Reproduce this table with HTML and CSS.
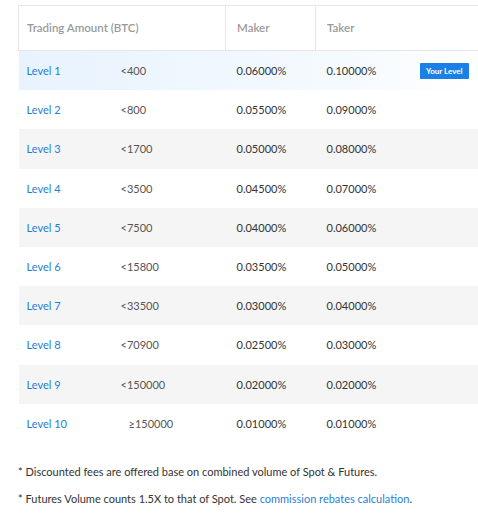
FILE: index.html
```html
<!DOCTYPE html>
<html lang="en">
  <head>
    <meta charset="UTF-8" />
    <meta name="viewport" content="width=device-width, initial-scale=1.0" />
    <title>Fee Levels</title>
    <link rel="stylesheet" href="styles.css">
  </head>
  <body>
    <div class="fees">
      <table class="fee-table">
        <colgroup>
          <col class="c-level" />
          <col class="c-amount" />
          <col class="c-maker" />
          <col class="c-taker" />
          <col class="c-badge" />
        </colgroup>
        <thead>
          <tr>
            <th colspan="2" class="col-amount">Trading Amount (BTC)</th>
            <th>Maker</th>
            <th>Taker</th>
            <th class="col-badge"></th>
          </tr>
        </thead>
        <tbody>
          <tr class="current">
            <td class="level">Level 1</td>
            <td class="amount">&lt;400</td>
            <td>0.06000%</td>
            <td>0.10000%</td>
            <td class="badge-cell"><span class="badge">Your Level</span></td>
          </tr>
          <tr>
            <td class="level">Level 2</td>
            <td class="amount">&lt;800</td>
            <td>0.05500%</td>
            <td>0.09000%</td>
            <td></td>
          </tr>
          <tr class="stripe">
            <td class="level">Level 3</td>
            <td class="amount">&lt;1700</td>
            <td>0.05000%</td>
            <td>0.08000%</td>
            <td></td>
          </tr>
          <tr>
            <td class="level">Level 4</td>
            <td class="amount">&lt;3500</td>
            <td>0.04500%</td>
            <td>0.07000%</td>
            <td></td>
          </tr>
          <tr class="stripe">
            <td class="level">Level 5</td>
            <td class="amount">&lt;7500</td>
            <td>0.04000%</td>
            <td>0.06000%</td>
            <td></td>
          </tr>
          <tr>
            <td class="level">Level 6</td>
            <td class="amount">&lt;15800</td>
            <td>0.03500%</td>
            <td>0.05000%</td>
            <td></td>
          </tr>
          <tr class="stripe">
            <td class="level">Level 7</td>
            <td class="amount">&lt;33500</td>
            <td>0.03000%</td>
            <td>0.04000%</td>
            <td></td>
          </tr>
          <tr>
            <td class="level">Level 8</td>
            <td class="amount">&lt;70900</td>
            <td>0.02500%</td>
            <td>0.03000%</td>
            <td></td>
          </tr>
          <tr class="stripe">
            <td class="level">Level 9</td>
            <td class="amount">&lt;150000</td>
            <td>0.02000%</td>
            <td>0.02000%</td>
            <td></td>
          </tr>
          <tr>
            <td class="level">Level 10</td>
            <td class="amount top">&ge;150000</td>
            <td>0.01000%</td>
            <td>0.01000%</td>
            <td></td>
          </tr>
        </tbody>
      </table>

      <p class="note">* Discounted fees are offered base on combined volume of Spot &amp; Futures.</p>
      <p class="note">* Futures Volume counts 1.5X to that of Spot. See <a href="#" class="link">commission rebates calculation</a>.</p>
    </div>
  </body>
</html>
```

FILE: styles.css
```css
body {
  margin: 0;
  background: #fff;
  font-family: Lato, "Noto Sans", sans-serif;
  color: #333;
}
.fees {
  padding: 5px 0 0 18px;
}
.fee-table {
  width: 460px;
  border-collapse: collapse;
  table-layout: fixed;
  font-size: 11px;
}
.c-level {
  width: 94px;
}
.c-amount {
  width: 113px;
}
.c-maker {
  width: 90px;
}
.c-taker {
  width: 90px;
}
.c-badge {
  width: 73px;
}
.fee-table th {
  height: 43px;
  padding: 0 11px 1px;
  text-align: left;
  font-weight: 600;
  font-size: 11.5px;
  color: #9a9a9a;
  border-top: 1px solid #e6e6e6;
  border-bottom: 1px solid #e6e6e6;
  border-left: 1px solid #e6e6e6;
}
.fee-table th.col-amount {
  padding-left: 8px;
}
.fee-table th.col-badge {
  border-left: none;
}
.fee-table td {
  height: 39.2px;
  padding: 0 11px;
  color: #333;
}
.fee-table td.level {
  padding-left: 8px;
  color: #1f7fd4;
}
.fee-table td.amount {
  color: #555;
  padding-left: 8px;
}
.fee-table td.top {
  padding-left: 16px;
}
.fee-table tr.stripe td {
  background: #f5f5f5;
}
.fee-table tr.current {
  background: linear-gradient(to right, #e8f3fe, #f5faff 70%, #fff);
}
.fee-table td.badge-cell {
  text-align: right;
  padding-right: 10px;
}
.badge {
  display: inline-block;
  padding: 3px 6px;
  background: #1a7fe6;
  color: #fff;
  font-size: 8px;
  font-weight: 700;
  border-radius: 1px;
}
.note {
  margin: 0;
  font-size: 11px;
  color: #333;
  line-height: 27px;
}
.fees .note:first-of-type {
  margin-top: 15px;
}
.link {
  color: #1f7fd4;
  text-decoration: none;
}
```
